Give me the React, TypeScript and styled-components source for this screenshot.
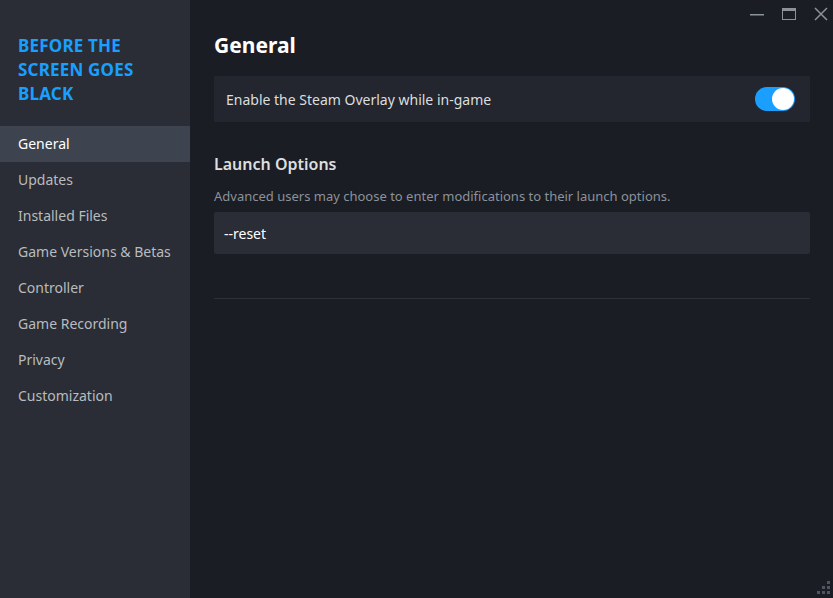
import React, { useState } from 'react';
import styled, { createGlobalStyle } from 'styled-components';

const GlobalStyle = createGlobalStyle`
  html, body {
    margin: 0;
    padding: 0;
    background: #1a1d24;
    font-family: "Noto Sans", "Liberation Sans", sans-serif;
  }
  * { box-sizing: border-box; }
`;

const menuItems = [
  'General',
  'Updates',
  'Installed Files',
  'Game Versions & Betas',
  'Controller',
  'Game Recording',
  'Privacy',
  'Customization',
];

const gripDots = [
  [10, 0],
  [5, 5],
  [10, 5],
  [0, 10],
  [5, 10],
  [10, 10],
];

const App = () => {
  const [selected, setSelected] = useState('General');
  const [overlay, setOverlay] = useState(true);
  const [launch, setLaunch] = useState('--reset');

  return (
    <>
      <GlobalStyle />
      <Window>
        <Sidebar>
          <GameTitle>BEFORE THE SCREEN GOES BLACK</GameTitle>
          <Menu>
            {menuItems.map((item) => (
              <MenuItem key={item} $active={item === selected} onClick={() => setSelected(item)}>
                {item}
              </MenuItem>
            ))}
          </Menu>
        </Sidebar>
        <Main>
          <TitleBar>
            <WinButton aria-label="minimize">
              <svg width="16" height="16" viewBox="0 0 16 16">
                <rect x="1" y="8" width="14" height="1.5" fill="#8b929a" />
              </svg>
            </WinButton>
            <WinButton aria-label="maximize">
              <svg width="16" height="16" viewBox="0 0 16 16">
                <rect x="1.5" y="2.5" width="13" height="11" fill="none" stroke="#8b929a" strokeWidth="1" />
                <rect x="1.5" y="2.5" width="13" height="2.5" fill="#8b929a" />
              </svg>
            </WinButton>
            <WinButton aria-label="close">
              <svg width="16" height="16" viewBox="0 0 16 16">
                <path d="M2 2 L14 14 M14 2 L2 14" stroke="#8b929a" strokeWidth="1.5" />
              </svg>
            </WinButton>
          </TitleBar>
          <Content>
            <PageTitle>General</PageTitle>
            <SettingRow>
              <RowLabel>Enable the Steam Overlay while in-game</RowLabel>
              <Toggle $on={overlay} onClick={() => setOverlay(!overlay)}>
                <Knob $on={overlay} />
              </Toggle>
            </SettingRow>
            <SectionTitle>Launch Options</SectionTitle>
            <Description>Advanced users may choose to enter modifications to their launch options.</Description>
            <LaunchInput value={launch} onChange={(e) => setLaunch(e.target.value)} />
            <Divider />
          </Content>
          <Grip>
            <svg width="13" height="13" viewBox="0 0 13 13">
              {gripDots.map(([x, y]) => (
                <rect key={`${x}-${y}`} x={x} y={y} width="3" height="3" fill="#4f5560" />
              ))}
            </svg>
          </Grip>
        </Main>
      </Window>
    </>
  );
};

const Window = styled.div`
  display: flex;
  width: 833px;
  height: 598px;
  overflow: hidden;
`;

const Sidebar = styled.div`
  width: 190px;
  flex-shrink: 0;
  background: #2a2d35;
  display: flex;
  flex-direction: column;
`;

const GameTitle = styled.div`
  padding: 34px 18px 0 18px;
  height: 126px;
  color: #1a9fff;
  font-size: 17px;
  font-weight: 700;
  line-height: 24px;
  letter-spacing: 0.2px;
  text-transform: uppercase;
`;

const Menu = styled.div`
  display: flex;
  flex-direction: column;
`;

const MenuItem = styled.div<{ $active: boolean }>`
  height: 36px;
  display: flex;
  align-items: center;
  padding: 0 0 2px 18px;
  font-size: 14px;
  color: ${(p) => (p.$active ? '#ffffff' : '#b8bcbf')};
  background: ${(p) => (p.$active ? '#3d4450' : 'transparent')};
  cursor: pointer;
`;

const Main = styled.div`
  flex: 1;
  position: relative;
  background: #1a1d24;
`;

const TitleBar = styled.div`
  position: absolute;
  top: 0;
  right: 0;
  display: flex;
  padding-right: 0;
`;

const WinButton = styled.div`
  width: 32px;
  height: 28px;
  display: flex;
  align-items: center;
  justify-content: center;
  padding-left: 8px;
`;

const Content = styled.div`
  padding: 30px 23px 0 24px;
  display: flex;
  flex-direction: column;
`;

const PageTitle = styled.h1`
  margin: 0 0 16px 0;
  font-size: 21px;
  line-height: 30px;
  font-weight: 700;
  color: #ffffff;
`;

const SettingRow = styled.div`
  height: 46px;
  background: #23262e;
  display: flex;
  align-items: center;
  justify-content: space-between;
  padding: 0 15px 0 12px;
`;

const RowLabel = styled.span`
  font-size: 14px;
  color: #dcdedf;
`;

const Toggle = styled.div<{ $on: boolean }>`
  width: 40px;
  height: 24px;
  border-radius: 12px;
  background: ${(p) => (p.$on ? '#1a9fff' : '#4a4f59')};
  position: relative;
  cursor: pointer;
`;

const Knob = styled.div<{ $on: boolean }>`
  position: absolute;
  top: 1px;
  left: ${(p) => (p.$on ? '17px' : '1px')};
  width: 22px;
  height: 22px;
  border-radius: 50%;
  background: #ffffff;
`;

const SectionTitle = styled.h2`
  margin: 30px 0 0 0;
  font-size: 16px;
  line-height: 24px;
  font-weight: 600;
  color: #dcdedf;
`;

const Description = styled.p`
  margin: 11px 0 7px 0;
  font-size: 13px;
  line-height: 18px;
  color: #8b929a;
`;

const LaunchInput = styled.input`
  height: 42px;
  border: none;
  outline: none;
  background: #2a2d35;
  color: #ffffff;
  font-family: inherit;
  font-size: 14px;
  padding: 0 10px;
  border-radius: 2px;
`;

const Divider = styled.div`
  margin-top: 44px;
  height: 1px;
  background: #2d3139;
`;

const Grip = styled.div`
  position: absolute;
  right: 3px;
  bottom: 4px;
  width: 13px;
  height: 13px;
  display: flex;
`;

export default App;
